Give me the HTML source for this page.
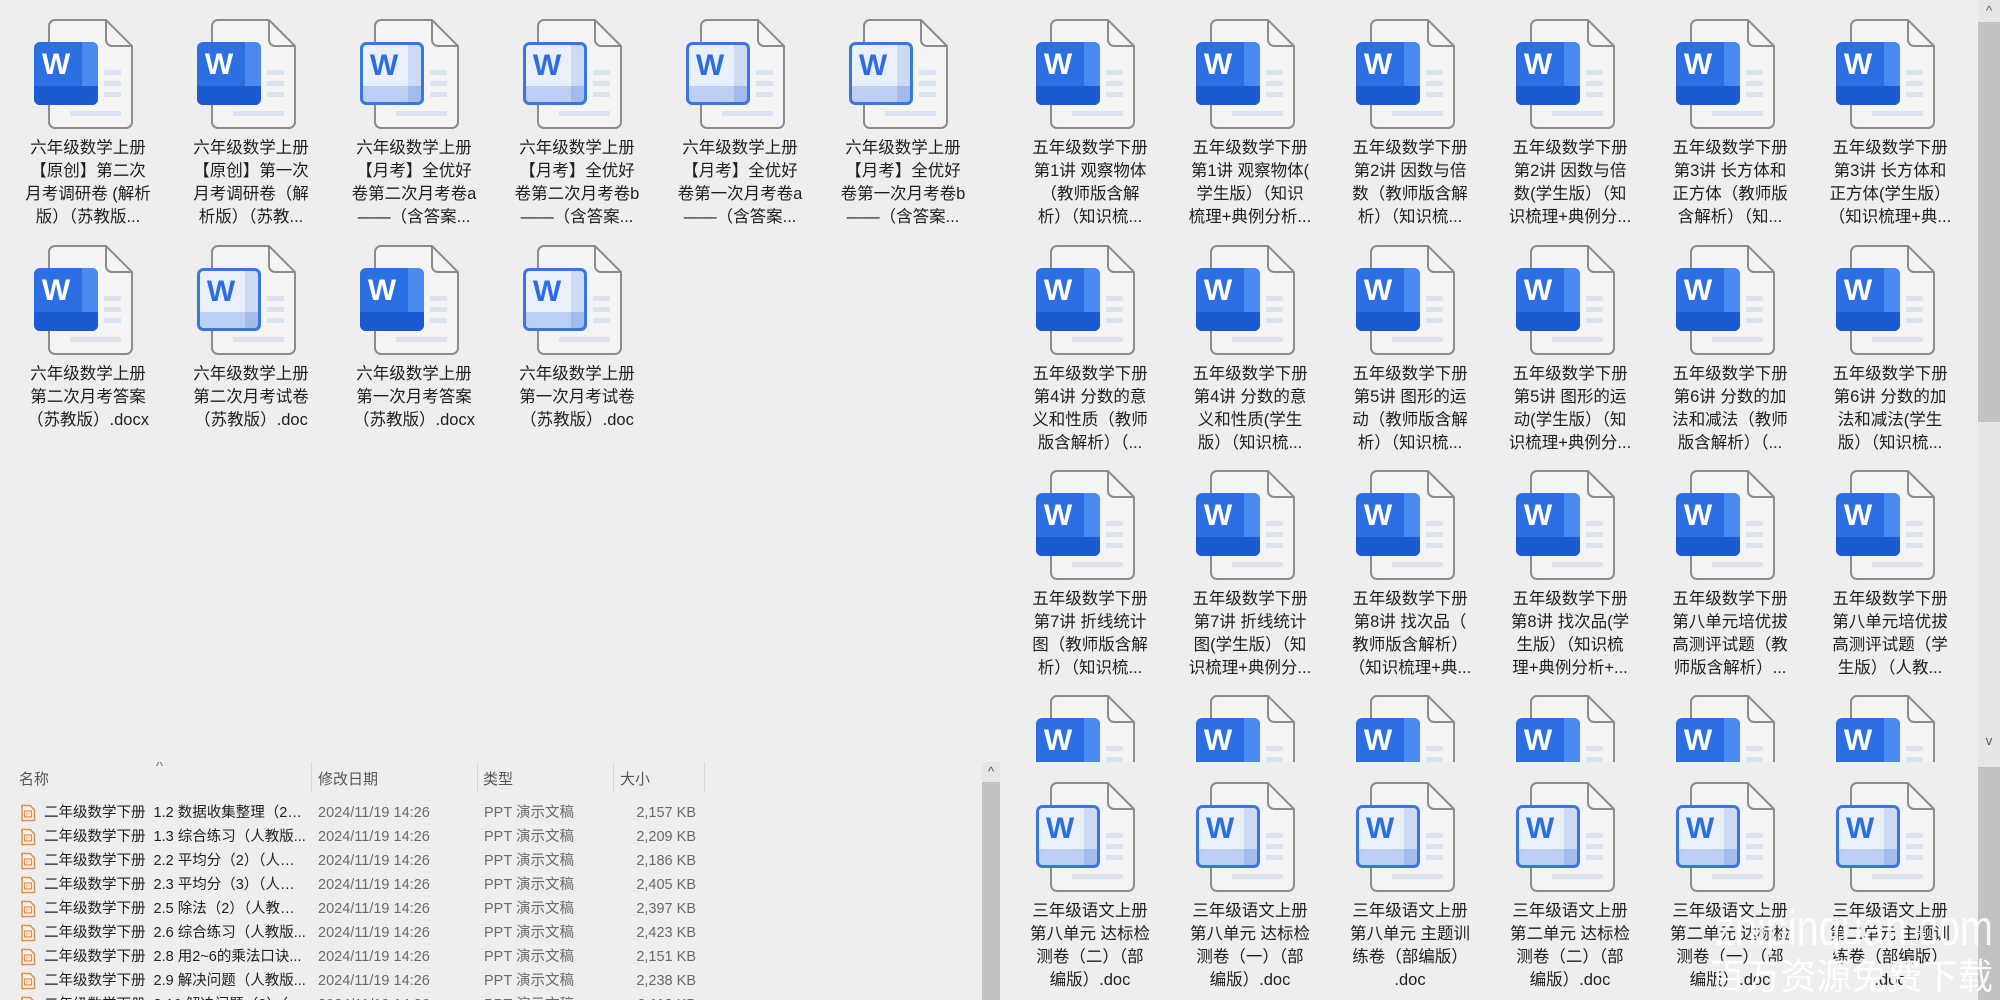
<!DOCTYPE html>
<html><head><meta charset="utf-8">
<style>
*{margin:0;padding:0;box-sizing:border-box}
html,body{width:2000px;height:1000px;overflow:hidden;background:#eeeeee;font-family:"Liberation Sans","Noto Sans CJK SC",sans-serif;}
.panel{position:absolute;overflow:hidden}
.cell{position:absolute;width:156px}
.cell svg{position:absolute;left:24px;top:0;width:105px;height:110px}
.cell .t{position:absolute;left:-4px;width:164px;top:118px;text-align:center;font-size:16.5px;line-height:23px;color:#1e1e1e;white-space:nowrap}
.sb{position:absolute;background:#e6e6e6}
.th{position:absolute;background:#c2c2c2}
.ar{position:absolute;font-size:13px;color:#555;text-align:center;width:100%;line-height:14px}
.lv{position:absolute;font-size:14.5px;white-space:nowrap}
.row{position:absolute;left:0;height:24px;width:980px}
.row span{position:absolute;top:0;line-height:24px;height:24px;overflow:hidden}
.row span.n{left:44px;width:262px;color:#1e1e1e;text-overflow:ellipsis}
.row span.d{left:318px;color:#6a6a6a}
.row span.y{left:484px;color:#6a6a6a}
.row span.s{right:284px;color:#6a6a6a}
.row svg{position:absolute;left:20px;top:3px}
</style></head><body>
<svg width="0" height="0" style="position:absolute">
<defs>
<clipPath id="cb"><rect x="0" y="23" width="64" height="63" rx="6"/></clipPath>
<symbol id="pg" viewBox="0 0 105 110">
<path d="M15,7a6,6 0 0 1 6,-6H72L98,27V103a6,6 0 0 1 -6,6H21a6,6 0 0 1 -6,-6Z" fill="#f4f4f4" stroke="#8c8c8c" stroke-width="2"/>
<path d="M72,1V21a6,6 0 0 0 6,6H98" fill="none" stroke="#8c8c8c" stroke-width="2"/>
<rect x="70" y="51" width="17" height="5" fill="#dbe3f0"/>
<rect x="70" y="62" width="17" height="5" fill="#dbe3f0"/>
<rect x="70" y="73" width="17" height="5" fill="#dbe3f0"/>
<rect x="36" y="92" width="51" height="5" fill="#dbe3f0"/>
</symbol>
<symbol id="dk" viewBox="0 0 105 110">
<use href="#pg" width="105" height="110"/>
<g clip-path="url(#cb)">
<rect x="0" y="23" width="64" height="63" fill="#2b6fe2"/>
<rect x="48" y="23" width="16" height="63" fill="#4a89ee"/>
<rect x="0" y="67" width="64" height="19" fill="#1b5bd2"/>
</g>
<text x="22" y="55" text-anchor="middle" font-family="Liberation Sans" font-weight="bold" font-size="30" fill="#fff">W</text>
</symbol>
<symbol id="lt" viewBox="0 0 105 110">
<use href="#pg" width="105" height="110"/>
<g clip-path="url(#cb)">
<rect x="0" y="23" width="64" height="63" fill="#eaf0fb"/>
<rect x="48" y="23" width="16" height="63" fill="#ccdaf3"/>
<rect x="0" y="67" width="64" height="19" fill="#bccff2"/>
<rect x="48" y="67" width="16" height="19" fill="#9fbcec"/>
</g>
<rect x="1.5" y="24.5" width="61" height="60" rx="5" fill="none" stroke="#3a76e0" stroke-width="3"/>
<text x="24" y="56" text-anchor="middle" font-family="Liberation Sans" font-weight="bold" font-size="30" fill="#2d6de0">W</text>
</symbol>
<symbol id="pp" viewBox="0 0 16 18">
<path d="M2,1.5H10L14.5,6V16.5H2Z" fill="#fff5ec" stroke="#e08a4a" stroke-width="1.5"/>
<rect x="4.5" y="7" width="7" height="6" fill="none" stroke="#e08a4a" stroke-width="1.2"/>
<text x="8" y="12.3" text-anchor="middle" font-size="5.5" fill="#e08a4a" font-family="Liberation Sans">P</text>
</symbol>
</defs>
</svg>

<!-- left top panel -->
<div class="panel" style="left:0;top:0;width:1000px;height:762px">
<div class="cell" style="left:10px;top:19px"><svg><use href="#dk"/></svg><div class="t">六年级数学上册<br>【原创】第二次<br>月考调研卷 (解析<br>版）（苏教版...</div></div>
<div class="cell" style="left:173px;top:19px"><svg><use href="#dk"/></svg><div class="t">六年级数学上册<br>【原创】第一次<br>月考调研卷（解<br>析版）（苏教...</div></div>
<div class="cell" style="left:336px;top:19px"><svg><use href="#lt"/></svg><div class="t">六年级数学上册<br>【月考】全优好<br>卷第二次月考卷a<br>——（含答案...</div></div>
<div class="cell" style="left:499px;top:19px"><svg><use href="#lt"/></svg><div class="t">六年级数学上册<br>【月考】全优好<br>卷第二次月考卷b<br>——（含答案...</div></div>
<div class="cell" style="left:662px;top:19px"><svg><use href="#lt"/></svg><div class="t">六年级数学上册<br>【月考】全优好<br>卷第一次月考卷a<br>——（含答案...</div></div>
<div class="cell" style="left:825px;top:19px"><svg><use href="#lt"/></svg><div class="t">六年级数学上册<br>【月考】全优好<br>卷第一次月考卷b<br>——（含答案...</div></div>
<div class="cell" style="left:10px;top:245px"><svg><use href="#dk"/></svg><div class="t">六年级数学上册<br>第二次月考答案<br>（苏教版）.docx</div></div>
<div class="cell" style="left:173px;top:245px"><svg><use href="#lt"/></svg><div class="t">六年级数学上册<br>第二次月考试卷<br>（苏教版）.doc</div></div>
<div class="cell" style="left:336px;top:245px"><svg><use href="#dk"/></svg><div class="t">六年级数学上册<br>第一次月考答案<br>（苏教版）.docx</div></div>
<div class="cell" style="left:499px;top:245px"><svg><use href="#lt"/></svg><div class="t">六年级数学上册<br>第一次月考试卷<br>（苏教版）.doc</div></div>
</div>

<!-- left bottom details panel -->
<div class="panel" style="left:0;top:762px;width:1000px;height:238px">
<div class="lv" style="left:19px;top:6px;color:#555;font-size:15px">名称</div>
<div class="lv" style="left:156px;top:-4px;color:#777;font-size:15px">^</div>
<div style="position:absolute;left:311px;top:0;width:1px;height:30px;background:#d8d8d8"></div>
<div class="lv" style="left:318px;top:6px;color:#555;font-size:15px">修改日期</div>
<div style="position:absolute;left:477px;top:0;width:1px;height:30px;background:#d8d8d8"></div>
<div class="lv" style="left:483px;top:6px;color:#555;font-size:15px">类型</div>
<div style="position:absolute;left:613px;top:0;width:1px;height:30px;background:#d8d8d8"></div>
<div class="lv" style="left:620px;top:6px;color:#555;font-size:15px">大小</div>
<div style="position:absolute;left:704px;top:0;width:1px;height:30px;background:#d8d8d8"></div>

<div class="row lv" style="top:39px"><svg width="16" height="18"><use href="#pp"/></svg><span class="n">二年级数学下册&nbsp; 1.2 数据收集整理（2）...</span><span class="d">2024/11/19 14:26</span><span class="y">PPT 演示文稿</span><span class="s">2,157 KB</span></div>
<div class="row lv" style="top:63px"><svg width="16" height="18"><use href="#pp"/></svg><span class="n">二年级数学下册&nbsp; 1.3 综合练习（人教版...</span><span class="d">2024/11/19 14:26</span><span class="y">PPT 演示文稿</span><span class="s">2,209 KB</span></div>
<div class="row lv" style="top:87px"><svg width="16" height="18"><use href="#pp"/></svg><span class="n">二年级数学下册&nbsp; 2.2 平均分（2）（人教...</span><span class="d">2024/11/19 14:26</span><span class="y">PPT 演示文稿</span><span class="s">2,186 KB</span></div>
<div class="row lv" style="top:111px"><svg width="16" height="18"><use href="#pp"/></svg><span class="n">二年级数学下册&nbsp; 2.3 平均分（3）（人教...</span><span class="d">2024/11/19 14:26</span><span class="y">PPT 演示文稿</span><span class="s">2,405 KB</span></div>
<div class="row lv" style="top:135px"><svg width="16" height="18"><use href="#pp"/></svg><span class="n">二年级数学下册&nbsp; 2.5 除法（2）（人教版...</span><span class="d">2024/11/19 14:26</span><span class="y">PPT 演示文稿</span><span class="s">2,397 KB</span></div>
<div class="row lv" style="top:159px"><svg width="16" height="18"><use href="#pp"/></svg><span class="n">二年级数学下册&nbsp; 2.6 综合练习（人教版...</span><span class="d">2024/11/19 14:26</span><span class="y">PPT 演示文稿</span><span class="s">2,423 KB</span></div>
<div class="row lv" style="top:183px"><svg width="16" height="18"><use href="#pp"/></svg><span class="n">二年级数学下册&nbsp; 2.8 用2~6的乘法口诀...</span><span class="d">2024/11/19 14:26</span><span class="y">PPT 演示文稿</span><span class="s">2,151 KB</span></div>
<div class="row lv" style="top:207px"><svg width="16" height="18"><use href="#pp"/></svg><span class="n">二年级数学下册&nbsp; 2.9 解决问题（人教版...</span><span class="d">2024/11/19 14:26</span><span class="y">PPT 演示文稿</span><span class="s">2,238 KB</span></div>
<div class="row lv" style="top:231px"><svg width="16" height="18"><use href="#pp"/></svg><span class="n">二年级数学下册&nbsp; 2.10 解决问题（2）（...</span><span class="d">2024/11/19 14:26</span><span class="y">PPT 演示文稿</span><span class="s">2,113 KB</span></div>

<div class="sb" style="left:982px;top:0;width:18px;height:238px"><div class="ar" style="top:3px">^</div><div class="th" style="left:0;top:20px;width:18px;height:218px"></div></div>
</div>

<!-- right top panel -->
<div class="panel" style="left:1000px;top:0;width:1000px;height:762px">
<div class="cell" style="left:12px;top:19px"><svg><use href="#dk"/></svg><div class="t">五年级数学下册<br>第1讲 观察物体<br>（教师版含解<br>析）（知识梳...</div></div>
<div class="cell" style="left:172px;top:19px"><svg><use href="#dk"/></svg><div class="t">五年级数学下册<br>第1讲 观察物体(<br>学生版）（知识<br>梳理+典例分析...</div></div>
<div class="cell" style="left:332px;top:19px"><svg><use href="#dk"/></svg><div class="t">五年级数学下册<br>第2讲 因数与倍<br>数（教师版含解<br>析）（知识梳...</div></div>
<div class="cell" style="left:492px;top:19px"><svg><use href="#dk"/></svg><div class="t">五年级数学下册<br>第2讲 因数与倍<br>数(学生版）（知<br>识梳理+典例分...</div></div>
<div class="cell" style="left:652px;top:19px"><svg><use href="#dk"/></svg><div class="t">五年级数学下册<br>第3讲 长方体和<br>正方体（教师版<br>含解析）（知...</div></div>
<div class="cell" style="left:812px;top:19px"><svg><use href="#dk"/></svg><div class="t">五年级数学下册<br>第3讲 长方体和<br>正方体(学生版）<br>（知识梳理+典...</div></div>

<div class="cell" style="left:12px;top:245px"><svg><use href="#dk"/></svg><div class="t">五年级数学下册<br>第4讲 分数的意<br>义和性质（教师<br>版含解析）（...</div></div>
<div class="cell" style="left:172px;top:245px"><svg><use href="#dk"/></svg><div class="t">五年级数学下册<br>第4讲 分数的意<br>义和性质(学生<br>版）（知识梳...</div></div>
<div class="cell" style="left:332px;top:245px"><svg><use href="#dk"/></svg><div class="t">五年级数学下册<br>第5讲 图形的运<br>动（教师版含解<br>析）（知识梳...</div></div>
<div class="cell" style="left:492px;top:245px"><svg><use href="#dk"/></svg><div class="t">五年级数学下册<br>第5讲 图形的运<br>动(学生版）（知<br>识梳理+典例分...</div></div>
<div class="cell" style="left:652px;top:245px"><svg><use href="#dk"/></svg><div class="t">五年级数学下册<br>第6讲 分数的加<br>法和减法（教师<br>版含解析）（...</div></div>
<div class="cell" style="left:812px;top:245px"><svg><use href="#dk"/></svg><div class="t">五年级数学下册<br>第6讲 分数的加<br>法和减法(学生<br>版）（知识梳...</div></div>

<div class="cell" style="left:12px;top:470px"><svg><use href="#dk"/></svg><div class="t">五年级数学下册<br>第7讲 折线统计<br>图（教师版含解<br>析）（知识梳...</div></div>
<div class="cell" style="left:172px;top:470px"><svg><use href="#dk"/></svg><div class="t">五年级数学下册<br>第7讲 折线统计<br>图(学生版）（知<br>识梳理+典例分...</div></div>
<div class="cell" style="left:332px;top:470px"><svg><use href="#dk"/></svg><div class="t">五年级数学下册<br>第8讲 找次品（<br>教师版含解析）<br>（知识梳理+典...</div></div>
<div class="cell" style="left:492px;top:470px"><svg><use href="#dk"/></svg><div class="t">五年级数学下册<br>第8讲 找次品(学<br>生版）（知识梳<br>理+典例分析+...</div></div>
<div class="cell" style="left:652px;top:470px"><svg><use href="#dk"/></svg><div class="t">五年级数学下册<br>第八单元培优拔<br>高测评试题（教<br>师版含解析）...</div></div>
<div class="cell" style="left:812px;top:470px"><svg><use href="#dk"/></svg><div class="t">五年级数学下册<br>第八单元培优拔<br>高测评试题（学<br>生版）（人教...</div></div>

<div class="cell" style="left:12px;top:695px"><svg><use href="#dk"/></svg></div>
<div class="cell" style="left:172px;top:695px"><svg><use href="#dk"/></svg></div>
<div class="cell" style="left:332px;top:695px"><svg><use href="#dk"/></svg></div>
<div class="cell" style="left:492px;top:695px"><svg><use href="#dk"/></svg></div>
<div class="cell" style="left:652px;top:695px"><svg><use href="#dk"/></svg></div>
<div class="cell" style="left:812px;top:695px"><svg><use href="#dk"/></svg></div>

<div class="sb" style="left:978px;top:0;width:22px;height:762px"><div class="ar" style="top:4px">^</div><div class="th" style="left:0;top:22px;width:22px;height:400px"></div><div class="ar" style="top:734px">v</div></div>
</div>

<!-- right bottom panel -->
<div class="panel" style="left:1000px;top:762px;width:1000px;height:238px">
<div class="cell" style="left:12px;top:20px"><svg><use href="#lt"/></svg><div class="t">三年级语文上册<br>第八单元 达标检<br>测卷（二）（部<br>编版）.doc</div></div>
<div class="cell" style="left:172px;top:20px"><svg><use href="#lt"/></svg><div class="t">三年级语文上册<br>第八单元 达标检<br>测卷（一）（部<br>编版）.doc</div></div>
<div class="cell" style="left:332px;top:20px"><svg><use href="#lt"/></svg><div class="t">三年级语文上册<br>第八单元 主题训<br>练卷（部编版）<br>.doc</div></div>
<div class="cell" style="left:492px;top:20px"><svg><use href="#lt"/></svg><div class="t">三年级语文上册<br>第二单元 达标检<br>测卷（二）（部<br>编版）.doc</div></div>
<div class="cell" style="left:652px;top:20px"><svg><use href="#lt"/></svg><div class="t">三年级语文上册<br>第二单元 达标检<br>测卷（一）（部<br>编版）.doc</div></div>
<div class="cell" style="left:812px;top:20px"><svg><use href="#lt"/></svg><div class="t">三年级语文上册<br>第二单元 主题训<br>练卷（部编版）<br>.doc</div></div>
<div class="sb" style="left:978px;top:0;width:22px;height:238px"><div class="ar" style="top:-10px">^</div><div class="th" style="left:0;top:5px;width:22px;height:233px"></div></div>
</div>

<!-- watermark -->
<svg style="position:absolute;left:1700px;top:895px" width="300" height="105">
<text x="15" y="50" textLength="278" lengthAdjust="spacingAndGlyphs" font-family="Liberation Sans" font-size="50" fill="#ffffff" fill-opacity="0.85">zhipinquan.com</text>
<text x="10" y="94" textLength="283" lengthAdjust="spacingAndGlyphs" font-family="Liberation Sans, Noto Sans CJK SC, sans-serif" font-size="36" fill="#ffffff" fill-opacity="0.9">百万资源免费下载</text>
</svg>
</body></html>
